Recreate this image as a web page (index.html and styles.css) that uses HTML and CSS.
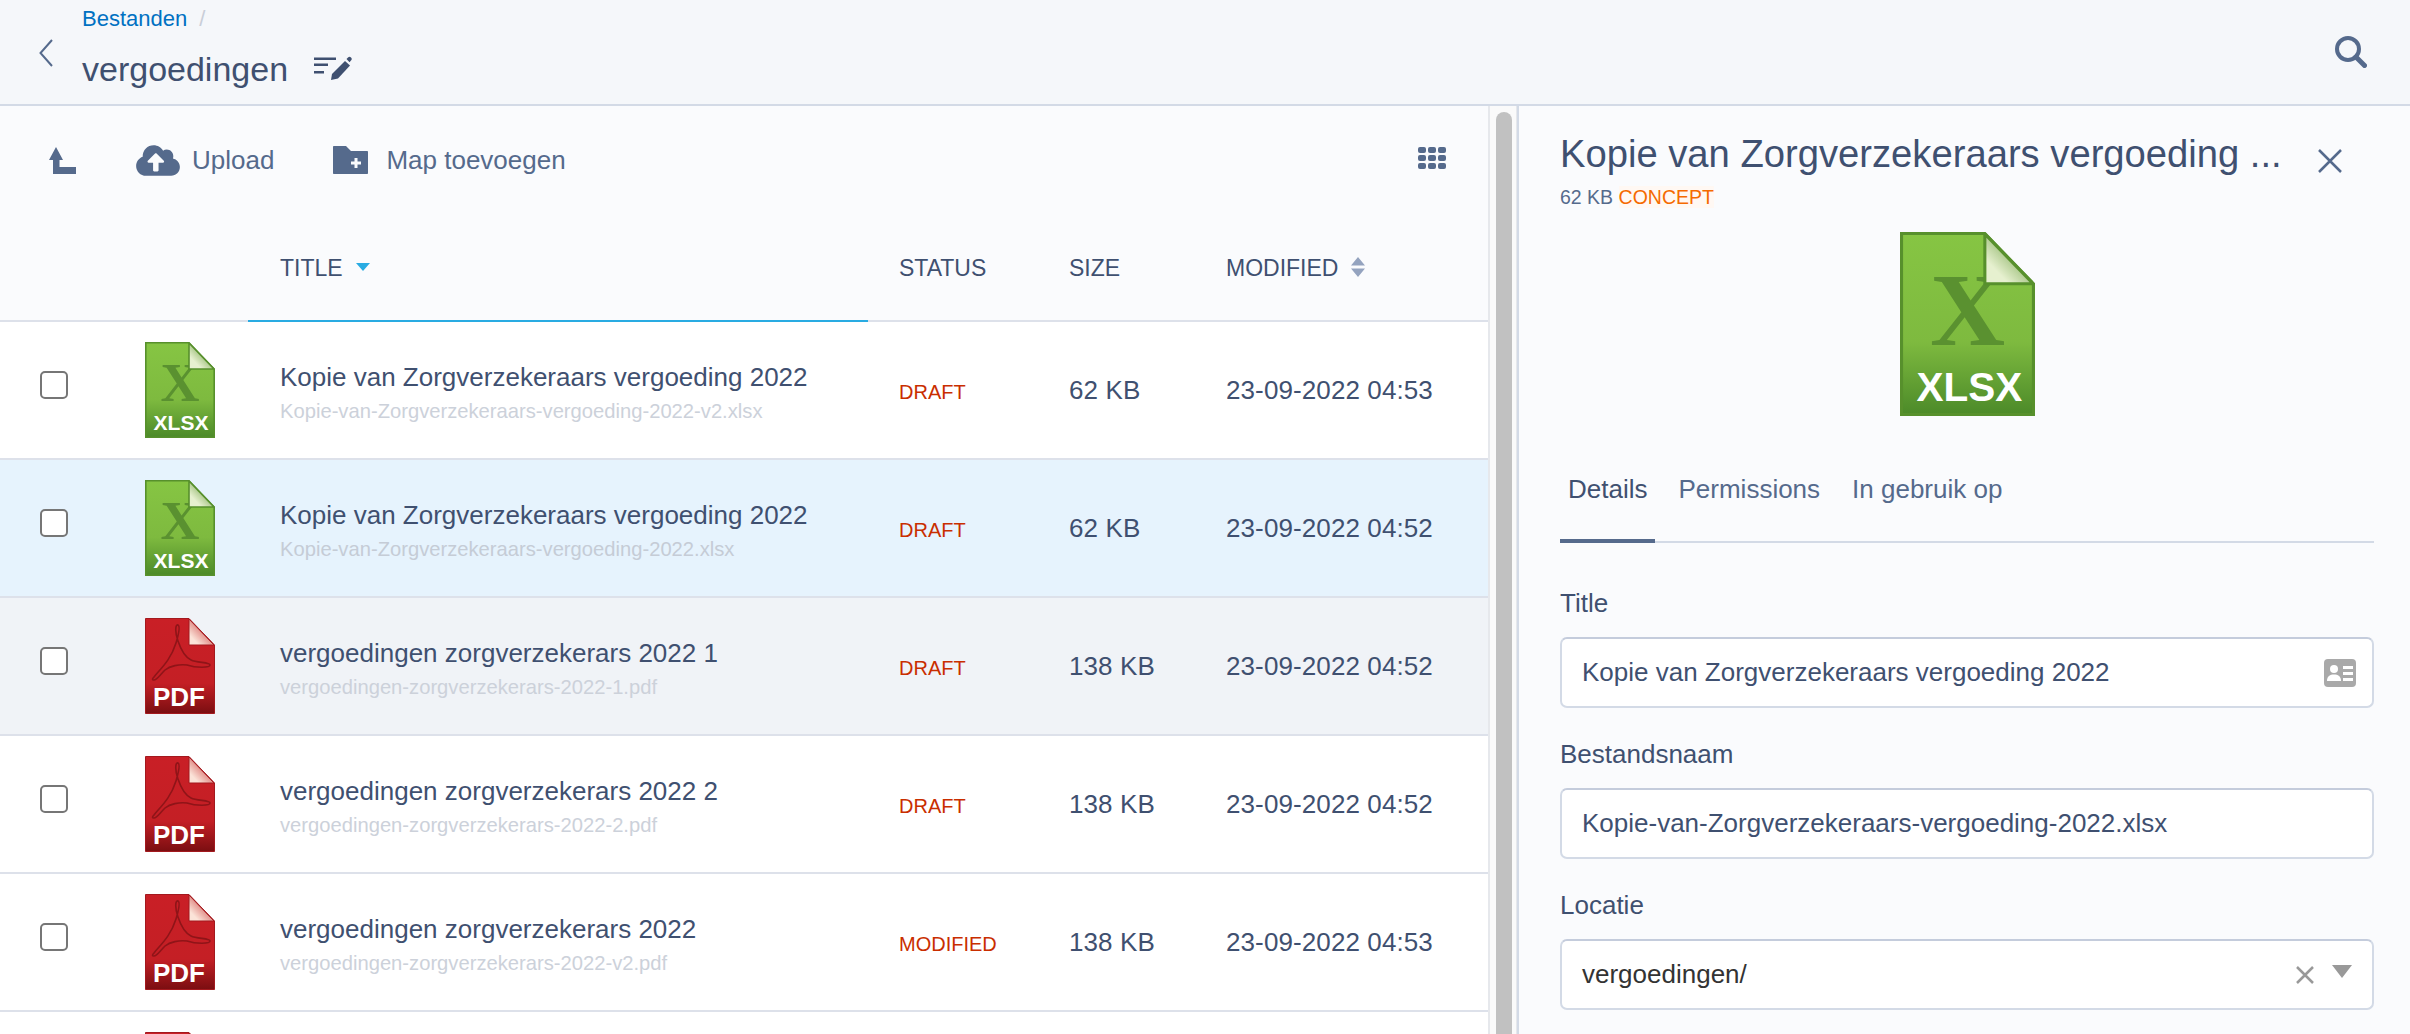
FILE: index.html
```html
<!DOCTYPE html>
<html lang="en">
<head>
<meta name="viewport" content="width=device-width, initial-scale=1.0">
<link rel="stylesheet" href="styles.css">
<title>vergoedingen</title>
</head>
<body>
  <!-- shared parts of the file icons -->
  <svg class="defs" width="0" height="0">
    <defs>
      <linearGradient id="green-body" x1="0" y1="0" x2="0" y2="1">
        <stop offset="0" stop-color="#86c543"/>
        <stop offset="0.6" stop-color="#7eba3f"/>
        <stop offset="1" stop-color="#4c8a29"/>
      </linearGradient>
      <linearGradient id="green-fold" x1="1" y1="0" x2="0" y2="1">
        <stop offset="0.2" stop-color="#6f9f45"/>
        <stop offset="0.75" stop-color="#e6f0cf"/>
      </linearGradient>
      <linearGradient id="red-body" x1="0" y1="0" x2="0" y2="1">
        <stop offset="0" stop-color="#c91f26"/>
        <stop offset="0.68" stop-color="#c41f25"/>
        <stop offset="1" stop-color="#7a0e11"/>
      </linearGradient>
      <linearGradient id="red-fold" x1="1" y1="0" x2="0" y2="1">
        <stop offset="0.15" stop-color="#c8393a"/>
        <stop offset="0.8" stop-color="#fbe3d8"/>
      </linearGradient>
      <path id="green-sheet" d="M.8.8H44L69.2 27V95.2H.8Z" fill="url(#green-body)" stroke="#57902c" stroke-width="1.6"/>
      <path id="green-flap" d="M44 1L69 27H44Z" fill="url(#green-fold)" stroke="#57902c" stroke-width="1.6" stroke-linejoin="round"/>
      <path id="red-sheet" d="M.5.5H44L69.5 27V95.5H.5Z" fill="url(#red-body)" stroke="#a3191e" stroke-width="1"/>
      <path id="red-flap" d="M44 1L69 27H44Z" fill="url(#red-fold)" stroke="#a3191e" stroke-width="1"/>
      <path id="acrobat" d="M9 59C14 52 25 44 31 25C34 15 35 8 33 7C30 6 30 15 33 23C36 32 40 39 46 42C52 45 65 44 65 47C65 50 51 50 42 47C34 46 25 48 20 52C14 58 12 62 9 62C7 62 7 61 9 59Z" fill="none" stroke="#8f1418" stroke-width="1.600"/>
    </defs>
  </svg>

  <header class="topbar">
    <svg class="back-icon" viewBox="0 0 14 28"><path d="M13 1L1.5 14L13 27" fill="none" stroke="#556a8c" stroke-width="2"/></svg>
    <div class="crumbs">
      <div class="crumb-line"><a class="crumb-link">Bestanden</a><span class="crumb-sep">/</span></div>
      <div class="page-title">
        <h1>vergoedingen</h1>
        <svg class="edit-icon" viewBox="0 0 38 24">
          <path d="M0 1.5H22V4H0ZM0 7.5H14V10H0ZM0 15H10V17.5H0Z" fill="#3f5070"/>
          <path d="M31 5L36 9.5L24 22.5L17 24L18 18Z" fill="#3f5070"/>
          <path d="M32.5 3L34 1.5C35 .6 36 .6 37 1.5C38 2.5 38 3.6 37 4.6L35.5 6.2Z" fill="#3f5070"/>
        </svg>
      </div>
    </div>
    <svg class="search-icon" viewBox="0 0 32 32">
      <circle cx="13" cy="13" r="11" fill="none" stroke="#556a8c" stroke-width="4"/>
      <path d="M21 21L29.500 29.500" fill="none" stroke="#556a8c" stroke-width="5" stroke-linecap="round"/>
    </svg>
  </header>

  <main class="workspace">
    <section class="browser">
      <div class="toolbar">
        <svg class="up-icon" viewBox="0 0 27 27"><path d="M7 0L14 13H10.500V20H27V27H4V13H0Z" fill="#556a8c"/></svg>
        <a class="tool">
          <svg class="cloud-icon" viewBox="0 0 640 512"><path fill="#556a8c" d="M537.600 226.600c4.100-10.700 6.400-22.400 6.400-34.600 0-53-43-96-96-96-19.700 0-38.100 6-53.300 16.200C367 64.200 315.300 32 256 32c-88.400 0-160 71.600-160 160 0 2.700.1 5.400.2 8.100C40.200 219.800 0 273.200 0 336c0 79.500 64.500 144 144 144h368c70.700 0 128-57.300 128-128 0-61.900-44-113.600-102.400-125.400zM393.400 288H328v112c0 8.800-7.200 16-16 16h-48c-8.800 0-16-7.200-16-16V288h-65.400c-14.300 0-21.400-17.200-11.300-27.300l105.400-105.400c6.200-6.200 16.400-6.200 22.600 0l105.400 105.400c10.100 10.100 2.900 27.300-11.300 27.300z"/></svg>
          Upload
        </a>
        <a class="tool">
          <svg class="folder-icon" viewBox="0 0 35 28">
            <path d="M1 0H13L18 5H34C34.600 5 35 5.400 35 6V27C35 27.600 34.600 28 34 28H1C.4 28 0 27.600 0 27V1C0 .4.4 0 1 0Z" fill="#556a8c"/>
            <path d="M21.500 12H24.500V15.500H28V18.500H24.500V22H21.500V18.500H18V15.500H21.500Z" fill="#fafbfd"/>
          </svg>
          Map toevoegen
        </a>
        <svg class="grid-icon" viewBox="0 0 28 22">
          <rect x="0" y="0" width="8" height="6" rx="2"/><rect x="10" y="0" width="8" height="6" rx="2"/><rect x="20" y="0" width="8" height="6" rx="2"/>
          <rect x="0" y="8" width="8" height="6" rx="2"/><rect x="10" y="8" width="8" height="6" rx="2"/><rect x="20" y="8" width="8" height="6" rx="2"/>
          <rect x="0" y="16" width="8" height="6" rx="2"/><rect x="10" y="16" width="8" height="6" rx="2"/><rect x="20" y="16" width="8" height="6" rx="2"/>
        </svg>
      </div>

      <table class="files">
        <colgroup>
          <col class="col-check"><col class="col-icon"><col class="col-title"><col class="col-status"><col class="col-size"><col class="col-date">
        </colgroup>
        <thead>
          <tr>
            <th></th>
            <th></th>
            <th class="sorted">TITLE<span class="caret-down"></span></th>
            <th>STATUS</th>
            <th>SIZE</th>
            <th>MODIFIED
              <svg class="sort-icon" viewBox="0 0 14 20"><path d="M7 0L14 8.500H0ZM0 11.500H14L7 20Z" fill="#94a3bf"/></svg>
            </th>
          </tr>
        </thead>
        <tbody>
          <tr>
            <td><input type="checkbox" class="check"></td>
            <td>
              <svg class="file-icon" viewBox="0 0 70 96" preserveAspectRatio="none">
                <use href="#green-sheet"/><text class="letter-x" x="35" y="59">X</text><use href="#green-flap"/><text class="file-label xlsx" x="36" y="88">XLSX</text>
              </svg>
            </td>
            <td><div class="file-title">Kopie van Zorgverzekeraars vergoeding 2022</div><div class="file-name">Kopie-van-Zorgverzekeraars-vergoeding-2022-v2.xlsx</div></td>
            <td class="status">DRAFT</td>
            <td class="cell">62 KB</td>
            <td class="cell">23-09-2022 04:53</td>
          </tr>
          <tr class="selected">
            <td><input type="checkbox" class="check"></td>
            <td>
              <svg class="file-icon" viewBox="0 0 70 96" preserveAspectRatio="none">
                <use href="#green-sheet"/><text class="letter-x" x="35" y="59">X</text><use href="#green-flap"/><text class="file-label xlsx" x="36" y="88">XLSX</text>
              </svg>
            </td>
            <td><div class="file-title">Kopie van Zorgverzekeraars vergoeding 2022</div><div class="file-name">Kopie-van-Zorgverzekeraars-vergoeding-2022.xlsx</div></td>
            <td class="status">DRAFT</td>
            <td class="cell">62 KB</td>
            <td class="cell">23-09-2022 04:52</td>
          </tr>
          <tr class="hovered">
            <td><input type="checkbox" class="check"></td>
            <td>
              <svg class="file-icon" viewBox="0 0 70 96" preserveAspectRatio="none">
                <use href="#red-sheet"/><use href="#red-flap"/><use href="#acrobat"/><text class="file-label pdf" x="34" y="88">PDF</text>
              </svg>
            </td>
            <td><div class="file-title">vergoedingen zorgverzekerars 2022 1</div><div class="file-name">vergoedingen-zorgverzekerars-2022-1.pdf</div></td>
            <td class="status">DRAFT</td>
            <td class="cell">138 KB</td>
            <td class="cell">23-09-2022 04:52</td>
          </tr>
          <tr>
            <td><input type="checkbox" class="check"></td>
            <td>
              <svg class="file-icon" viewBox="0 0 70 96" preserveAspectRatio="none">
                <use href="#red-sheet"/><use href="#red-flap"/><use href="#acrobat"/><text class="file-label pdf" x="34" y="88">PDF</text>
              </svg>
            </td>
            <td><div class="file-title">vergoedingen zorgverzekerars 2022 2</div><div class="file-name">vergoedingen-zorgverzekerars-2022-2.pdf</div></td>
            <td class="status">DRAFT</td>
            <td class="cell">138 KB</td>
            <td class="cell">23-09-2022 04:52</td>
          </tr>
          <tr>
            <td><input type="checkbox" class="check"></td>
            <td>
              <svg class="file-icon" viewBox="0 0 70 96" preserveAspectRatio="none">
                <use href="#red-sheet"/><use href="#red-flap"/><use href="#acrobat"/><text class="file-label pdf" x="34" y="88">PDF</text>
              </svg>
            </td>
            <td><div class="file-title">vergoedingen zorgverzekerars 2022</div><div class="file-name">vergoedingen-zorgverzekerars-2022-v2.pdf</div></td>
            <td class="status">MODIFIED</td>
            <td class="cell">138 KB</td>
            <td class="cell">23-09-2022 04:53</td>
          </tr>
          <tr>
            <td></td>
            <td>
              <svg class="file-icon" viewBox="0 0 70 96" preserveAspectRatio="none">
                <use href="#red-sheet"/><use href="#red-flap"/>
              </svg>
            </td>
            <td></td><td></td><td></td><td></td>
          </tr>
        </tbody>
      </table>
    </section>

    <div class="scrollbar"><div class="thumb"></div></div>

    <aside class="details">
      <div class="details-head">
        <h2>Kopie van Zorgverzekeraars vergoeding ...</h2>
        <svg class="close-icon" viewBox="0 0 24 24"><path d="M1 1L23 23M23 1L1 23" fill="none" stroke="#556a8c" stroke-width="2.500"/></svg>
      </div>
      <div class="details-meta">62 KB <span class="concept">CONCEPT</span></div>
      <svg class="preview-icon" viewBox="0 0 70 96" preserveAspectRatio="none">
        <use href="#green-sheet"/><text class="letter-x" x="35" y="59">X</text><use href="#green-flap"/><text class="file-label xlsx" x="36" y="88">XLSX</text>
      </svg>
      <nav class="tabs">
        <a class="tab active">Details</a>
        <a class="tab">Permissions</a>
        <a class="tab">In gebruik op</a>
      </nav>
      <label class="field-label">Title</label>
      <div class="field">
        Kopie van Zorgverzekeraars vergoeding 2022
        <svg class="card-icon" viewBox="0 0 32 28">
          <rect width="32" height="28" rx="4" fill="#a9a9a9"/>
          <circle cx="10" cy="10" r="4" fill="#fff"/>
          <path d="M3 22C3 17 6 15.500 10 15.500C14 15.500 17 17 17 22Z" fill="#fff"/>
          <path d="M19 7H29V10H19ZM19 13H29V16H19ZM19 19H29V22H19Z" fill="#fff"/>
        </svg>
      </div>
      <label class="field-label">Bestandsnaam</label>
      <div class="field">Kopie-van-Zorgverzekeraars-vergoeding-2022.xlsx</div>
      <label class="field-label">Locatie</label>
      <div class="field select">
        vergoedingen/
        <svg class="clear-icon" viewBox="0 0 18 18"><path d="M1 1L17 17M17 1L1 17" fill="none" stroke="#999" stroke-width="2.500"/></svg>
        <svg class="select-caret" viewBox="0 0 20 13"><path d="M0 0H20L10 13Z" fill="#999"/></svg>
      </div>
    </aside>
  </main>
</body>
</html>
```

FILE: styles.css
```css
html, body {
  margin: 0;
  height: 100%;
  overflow: hidden;
}
body {
  font-family: "Liberation Sans", Arial, sans-serif;
  color: #3f5070;
  background: #fafbfd;
}
.defs {
  display: block;
  height: 0;
}

/* top bar */
.topbar {
  display: flex;
  box-sizing: border-box;
  height: 106px;
  padding: 0 43px 0 39px;
  background: #f5f7fa;
  border-bottom: 2px solid #d3dae6;
}
.back-icon {
  width: 14px;
  height: 28px;
  margin-top: 39px;
}
.crumbs {
  flex: 1;
  margin-left: 29px;
  padding-top: 7px;
}
.crumb-line {
  font-size: 22px;
  line-height: 24px;
}
.crumb-link {
  color: #0071c2;
}
.crumb-sep {
  margin-left: 12px;
  color: #c9ced8;
}
.page-title {
  display: flex;
  align-items: center;
  margin-top: 16px;
}
h1 {
  margin: 0;
  font-size: 34px;
  font-weight: normal;
  line-height: 44px;
}
.edit-icon {
  width: 38px;
  height: 24px;
  margin: -3px 0 0 26px;
}
.search-icon {
  width: 32px;
  height: 32px;
  margin-top: 36px;
}

/* main columns */
.workspace {
  display: flex;
  height: 928px;
}
.browser {
  width: 1488px;
  flex: none;
  overflow: hidden;
}
.scrollbar {
  width: 29px;
  flex: none;
  box-sizing: border-box;
  padding: 6px 0 0 6px;
  background: #fafafa;
  border-left: 2px solid #e6e8ec;
  border-right: 1px solid #e6e8ec;
}
.thumb {
  width: 16px;
  height: 100%;
  background: #c1c1c1;
  border-radius: 8px 8px 0 0;
}
.details {
  flex: 1;
  box-sizing: border-box;
  padding: 0 36px 0 41px;
  border-left: 2px solid #d3dae6;
}

/* toolbar */
.toolbar {
  display: flex;
  align-items: center;
  height: 108px;
  padding: 0 42px 0 49px;
  font-size: 26px;
  color: #556a8c;
}
.tool {
  display: flex;
  align-items: center;
}
.up-icon {
  width: 27px;
  height: 27px;
  margin-right: 60px;
}
.cloud-icon {
  width: 44px;
  height: 35px;
  margin-right: 12px;
}
.folder-icon {
  width: 35px;
  height: 28px;
  margin: 0 18px 0 59px;
}
.grid-icon {
  width: 28px;
  height: 22px;
  margin-left: auto;
  margin-top: -4px;
  fill: #556a8c;
}

/* file table */
.files {
  width: 1488px;
  table-layout: fixed;
  border-collapse: separate;
  border-spacing: 0;
}
.col-check { width: 145px; }
.col-icon { width: 103px; }
.col-title { width: 620px; }
.col-status { width: 170px; }
.col-size { width: 157px; }
.col-date { width: 293px; }
.files th {
  box-sizing: border-box;
  height: 108px;
  padding: 2px 0 0 31px;
  text-align: left;
  font-size: 23px;
  font-weight: normal;
  border-bottom: 2px solid #dde1ea;
}
.files th:nth-child(-n+2) {
  padding: 0;
}
.files th.sorted {
  padding-left: 32px;
  border-bottom-color: #29abe2;
}
.caret-down {
  display: inline-block;
  margin: 0 0 5px 13px;
  vertical-align: middle;
  border: 7px solid transparent;
  border-top: 8px solid #29abe2;
  border-bottom: 0;
}
.sort-icon {
  width: 14px;
  height: 20px;
  margin-left: 6px;
  margin-bottom: 4px;
  vertical-align: middle;
}
.files td {
  box-sizing: border-box;
  height: 138px;
  padding: 0 0 0 31px;
  background: #fff;
  border-bottom: 2px solid #dde1ea;
}
.files td:first-child {
  padding: 0 0 10px 40px;
}
.files td:nth-child(2) {
  padding: 0;
}
.files td:nth-child(3) {
  padding: 4px 0 0 32px;
}
.files tr.selected td {
  background: #e6f3fd;
}
.files tr.hovered td {
  background: #f0f3f7;
}
.check {
  display: block;
  width: 28px;
  height: 28px;
  margin: 0;
  appearance: none;
  background: #fff;
  border: 2px solid #767676;
  border-radius: 5px;
}
.file-icon {
  display: block;
  width: 70px;
  height: 96px;
}
.file-label {
  font-family: "Liberation Sans", Arial, sans-serif;
  font-weight: bold;
  fill: #fff;
  text-anchor: middle;
}
.xlsx {
  font-size: 21px;
}
.pdf {
  font-size: 26px;
}
.letter-x {
  font-family: "Liberation Serif", "Times New Roman", serif;
  font-size: 54px;
  font-weight: bold;
  fill: #5a9130;
  text-anchor: middle;
}
.file-title {
  font-size: 26px;
  line-height: 32px;
  white-space: nowrap;
}
.file-name {
  font-size: 20.2px;
  line-height: 24px;
  margin-top: 6px;
  color: #ccd1da;
  white-space: nowrap;
}
.selected .file-name {
  color: #c5ccd6;
}
.files td.status {
  padding-top: 4px;
  font-size: 20px;
  color: #c92e00;
}
.cell {
  font-size: 26px;
  letter-spacing: .1px;
  white-space: nowrap;
}

/* details panel */
.details-head {
  display: flex;
  align-items: center;
  justify-content: space-between;
  height: 36px;
  padding: 30px 32px 0 0;
}
h2 {
  margin: 0;
  font-size: 38.2px;
  font-weight: normal;
  line-height: 44px;
  white-space: nowrap;
}
.close-icon {
  width: 24px;
  height: 24px;
  margin-top: 14px;
}
.details-meta {
  margin-top: 12px;
  font-size: 19.5px;
  line-height: 27px;
  color: #556a8c;
}
.concept {
  color: #f56a00;
  background: #fff8f3;
}
.preview-icon {
  display: block;
  width: 135px;
  height: 184px;
  margin: 21px 0 0 340px;
}
.tabs {
  display: flex;
  height: 76px;
  margin-top: 49px;
  align-items: flex-start;
  border-bottom: 2px solid #d3dae6;
  font-size: 26px;
  color: #556a8c;
}
.tab {
  height: 76px;
  box-sizing: border-box;
  padding: 8px 8px 0;
  margin-right: 16px;
  line-height: 32px;
}
.tab.active {
  margin-right: 15px;
  color: #3f5070;
  border-bottom: 4px solid #556a8c;
  height: 78px;
}
.field-label {
  display: block;
  margin-top: 44px;
  font-size: 26px;
  line-height: 32px;
}
.field {
  display: flex;
  align-items: center;
  justify-content: space-between;
  box-sizing: border-box;
  height: 71px;
  margin-top: 18px;
  padding: 0 16px 0 20px;
  font-size: 26px;
  background: #fff;
  border: 2px solid #d3dae6;
  border-top-color: #c4ccdc;
  border-radius: 7px;
  white-space: nowrap;
}
.field-label + .field + .field-label {
  margin-top: 30px;
}
.card-icon {
  width: 32px;
  height: 28px;
}
.select {
  justify-content: flex-start;
  color: #333;
}
.clear-icon {
  width: 18px;
  height: 18px;
  margin-left: auto;
}
.select-caret {
  width: 20px;
  height: 13px;
  margin: -6px 4px 0 18px;
}
```
